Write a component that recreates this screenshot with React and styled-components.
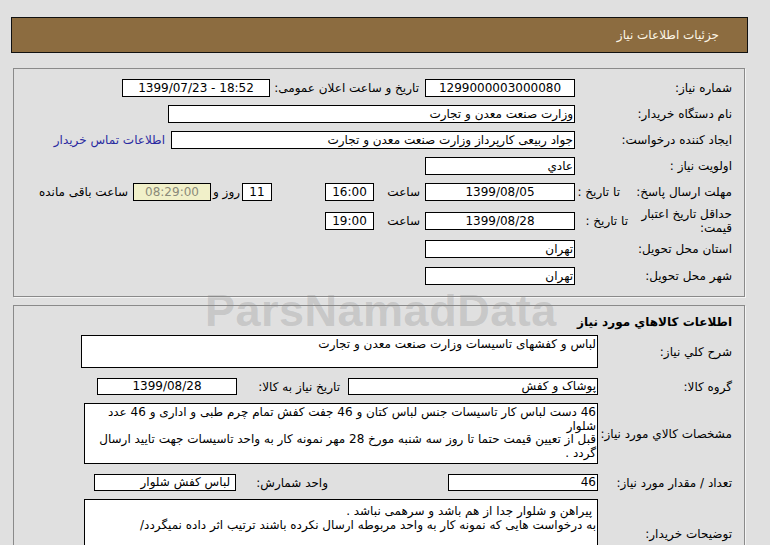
import React from "react";
import styled, { createGlobalStyle } from "styled-components";

const GlobalStyle = createGlobalStyle`
  html, body {
    margin: 0;
    padding: 0;
    background: #e0e0e0;
  }
  body {
    font-family: "DejaVu Sans", "Noto Sans", sans-serif;
    font-size: 12px;
    color: #000;
  }
`;

function App() {
  return (
    <Page>
      <GlobalStyle />
      <Header>جزئیات اطلاعات نیاز</Header>

      <Panel $top={15} $pad={6}>
        <Row $h={26}>
          <Label $w={157}>شماره نیاز:</Label>
          <Field $w={150} $align="center" $ltr>1299000003000080</Field>
          <Label $w={149} $gap={6}>تاریخ و ساعت اعلان عمومی:</Label>
          <Field $w={148} $align="center" $ltr>1399/07/23 - 18:52</Field>
        </Row>
        <Row $h={26}>
          <Label $w={157}>نام دستگاه خریدار:</Label>
          <Field $w={407}>وزارت صنعت معدن و تجارت</Field>
        </Row>
        <Row $h={26}>
          <Label $w={157}>ایجاد کننده درخواست:</Label>
          <Field $w={404}>جواد ربیعی کارپرداز وزارت صنعت معدن و تجارت</Field>
          <BuyerLink $gap={6}>اطلاعات تماس خریدار</BuyerLink>
        </Row>
        <Row $h={26}>
          <Label $w={157}>اولویت نیاز :</Label>
          <Field $w={150}>عادي</Field>
        </Row>
        <Row $h={25}>
          <Label $w={112}>مهلت ارسال پاسخ:</Label>
          <Label $w={45}>تا تاریخ :</Label>
          <Field $w={150} $align="center" $ltr>1399/08/05</Field>
          <Label $w={46} $gap={5}>ساعت</Label>
          <Field $w={49} $align="center" $ltr>16:00</Field>
          <Field $w={30} $gap={53} $align="center" $ltr>11</Field>
          <Label $w={29} $gap={2}>روز و</Label>
          <Field $w={78} $align="center" $ltr $bg="#f1f0c9" $color="#8a8a7a">
            08:29:00
          </Field>
          <Label $w={95} $gap={5}>ساعت باقی مانده</Label>
        </Row>
        <Row $h={33}>
          <Label $w={104} $lines>حداقل تاریخ اعتبار قیمت:</Label>
          <Label $w={53}>تا تاریخ :</Label>
          <Field $w={150} $align="center" $ltr>1399/08/28</Field>
          <Label $w={46} $gap={5}>ساعت</Label>
          <Field $w={49} $align="center" $ltr>19:00</Field>
        </Row>
        <Row $h={24}>
          <Label $w={157}>استان محل تحویل:</Label>
          <Field $w={150}>تهران</Field>
        </Row>
        <Row $h={29}>
          <Label $w={157}>شهر محل تحویل:</Label>
          <Field $w={150}>تهران</Field>
        </Row>
      </Panel>

      <Panel $top={8} $pad={0}>
        <Title>اطلاعات كالاهاي مورد نیاز</Title>
        <Row $h={33}>
          <Label $w={134}>شرح كلي نياز:</Label>
          <TextArea $w={517} $h={33}>
            لباس و کفشهای تاسیسات وزارت صنعت معدن و تجارت
          </TextArea>
        </Row>
        <Row $h={17} $mt={10}>
          <Label $w={134}>گروه کالا:</Label>
          <Field $w={250} $h={17}>پوشاک و کفش</Field>
          <Label $w={103} $gap={8}>تاریخ نیاز به کالا:</Label>
          <Field $w={140} $h={17} $align="center" $ltr>1399/08/28</Field>
        </Row>
        <Row $h={61} $mt={8}>
          <Label $w={134}>مشخصات كالاي مورد نياز:</Label>
          <TextArea $w={514} $h={61}>
            46 دست لباس کار تاسیسات  جنس لباس کتان و  46 جفت کفش تمام چرم طبی و اداری  و 46 عدد
            <br />
            شلوار
            <br />
            قبل از تعیین قیمت حتما تا روز سه شنبه مورخ 28 مهر نمونه کار به واحد تاسیسات جهت تایید ارسال
            <br />
            گردد .
          </TextArea>
        </Row>
        <Row $h={17} $mt={10}>
          <Label $w={134}>تعداد / مقدار مورد نیاز:</Label>
          <Field $w={150} $h={17}>46</Field>
          <Label $w={92} $gap={120}>واحد شمارش:</Label>
          <Field $w={142} $h={17}>
            &nbsp;لباس کفش شلوار
          </Field>
        </Row>
        <Row $h={70} $mt={8}>
          <Label $w={134}>توضیحات خریدار:</Label>
          <TextArea $w={514} $h={70} $padTop={5}>
            &nbsp;پیراهن و شلوار جدا از هم باشد و سرهمی نباشد .
            <br />
            به درخواست هایی که نمونه کار به واحد مربوطه ارسال نکرده باشند ترتیب اثر داده نمیگردد/
          </TextArea>
        </Row>
      </Panel>

      <Watermark>ParsNamadData</Watermark>
    </Page>
  );
}

const Page = styled.div`
  position: relative;
  width: 770px;
  height: 545px;
  overflow: hidden;
  padding: 17px 0 0 11px;
  box-sizing: border-box;
`;

const Header = styled.div`
  width: 737px;
  height: 36px;
  box-sizing: border-box;
  border: 1px solid #111;
  background: #8c6c40;
  color: #fdf6e6;
  direction: rtl;
  display: flex;
  align-items: center;
  padding-right: 28px;
  font-size: 12px;
`;

const Panel = styled.div`
  width: 732px;
  margin-left: 2px;
  margin-top: ${(p) => p.$top}px;
  box-sizing: border-box;
  border: 1px solid #8a8a8a;
  box-shadow: 1px 1px 0 #f4f4f4;
  padding: ${(p) => p.$pad}px 0;
  direction: rtl;
  display: flex;
  flex-direction: column;
`;

const Row = styled.div`
  display: flex;
  align-items: center;
  height: ${(p) => p.$h}px;
  margin-top: ${(p) => p.$mt || 0}px;
  padding-right: 12px;
`;

const Label = styled.div`
  flex: none;
  width: ${(p) => p.$w}px;
  margin-right: ${(p) => p.$gap || 0}px;
  text-align: right;
  white-space: ${(p) => (p.$lines ? "normal" : "nowrap")};
  line-height: ${(p) => (p.$lines ? "14px" : "16px")};
  font-size: 12px;
`;

const Field = styled.div`
  flex: none;
  width: ${(p) => p.$w}px;
  height: ${(p) => p.$h || 18}px;
  margin-right: ${(p) => p.$gap || 0}px;
  box-sizing: border-box;
  border: 1px solid #000;
  background: ${(p) => p.$bg || "#fff"};
  color: ${(p) => p.$color || "#000"};
  direction: ${(p) => (p.$ltr ? "ltr" : "rtl")};
  text-align: ${(p) => p.$align || "right"};
  line-height: ${(p) => (p.$h || 18) - 2}px;
  padding: 0 1px;
  font-size: 12px;
  white-space: nowrap;
  overflow: hidden;
`;

const TextArea = styled.div`
  flex: none;
  width: ${(p) => p.$w}px;
  height: ${(p) => p.$h}px;
  box-sizing: border-box;
  border: 1px solid #000;
  background: #fff;
  text-align: right;
  padding: ${(p) => p.$padTop || 2}px 1px 0;
  line-height: 13.5px;
  font-size: 12px;
  white-space: nowrap;
  overflow: hidden;
`;

const BuyerLink = styled.a`
  margin-right: ${(p) => p.$gap}px;
  color: #2a2aa0;
  font-size: 12px;
  white-space: nowrap;
  cursor: pointer;
`;

const Title = styled.div`
  height: 29px;
  display: flex;
  align-items: center;
  padding-right: 12px;
  padding-top: 3px;
  box-sizing: border-box;
  font-weight: bold;
  font-size: 12px;
`;

const Watermark = styled.div`
  position: absolute;
  left: 205px;
  top: 293px;
  line-height: 36px;
  height: 38px;
  font-family: "Liberation Sans", Arial, sans-serif;
  font-weight: bold;
  font-size: 45px;
  color: rgba(140, 140, 140, 0.3);
  pointer-events: none;
  letter-spacing: 0.5px;
`;

export default App;
